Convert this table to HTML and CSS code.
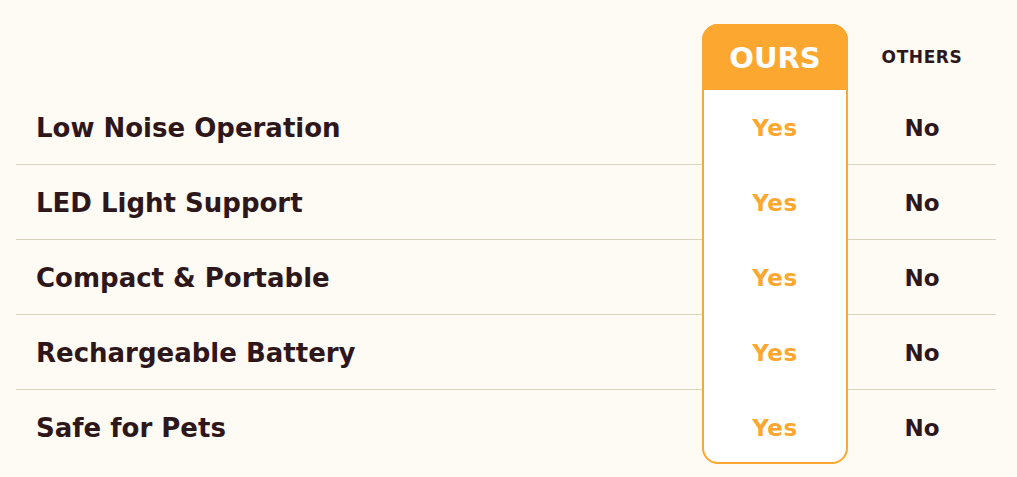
FILE: index.html
```html
<!DOCTYPE html>
<html lang="en">
<head>
<meta charset="utf-8">
<title>Comparison</title>
<link rel="stylesheet" href="styles.css">
</head>
<body>
<div class="table">
  <div class="ours-col"></div>
  <div class="head-ours">OURS</div>
  <div class="head-others">OTHERS</div>

  <div class="label line r1">Low Noise Operation</div>
  <div class="yes r1">Yes</div>
  <div class="no line r1">No</div>

  <div class="label line r2">LED Light Support</div>
  <div class="yes r2">Yes</div>
  <div class="no line r2">No</div>

  <div class="label line r3">Compact &amp; Portable</div>
  <div class="yes r3">Yes</div>
  <div class="no line r3">No</div>

  <div class="label line r4">Rechargeable Battery</div>
  <div class="yes r4">Yes</div>
  <div class="no line r4">No</div>

  <div class="label r5">Safe for Pets</div>
  <div class="yes r5">Yes</div>
  <div class="no r5">No</div>
</div>
</body>
</html>
```
FILE: styles.css
```css
html, body {
  margin: 0;
  padding: 0;
  background: #fefaf4;
}
body {
  font-family: "DejaVu Sans", sans-serif;
  color: #2e171a;
}
.table {
  display: grid;
  grid-template-columns: 686px 146px 148px;
  grid-template-rows: 66px repeat(4, 75px) 74px;
  margin: 24px 0 0 16px;
  width: 980px;
}
.r1 { grid-row: 2; }
.r2 { grid-row: 3; }
.r3 { grid-row: 4; }
.r4 { grid-row: 5; }
.r5 { grid-row: 6; }
.ours-col {
  grid-column: 2;
  grid-row: 1 / -1;
  background: #ffffff;
  border: 2px solid #fca730;
  border-radius: 16px;
}
.head-ours {
  grid-column: 2;
  grid-row: 1;
  background: #fca730;
  border-radius: 16px 16px 0 0;
  color: #ffffff;
  font-weight: 700;
  font-size: 29px;
  display: flex;
  align-items: center;
  justify-content: center;
  padding-top: 1px;
}
.head-others {
  grid-column: 3;
  grid-row: 1;
  font-weight: 700;
  font-size: 17px;
  letter-spacing: 0.6px;
  display: flex;
  align-items: center;
  justify-content: center;
}
.label {
  grid-column: 1;
  font-weight: 700;
  font-size: 26px;
  display: flex;
  align-items: center;
  padding-left: 20px;
  padding-top: 1px;
}
.yes {
  grid-column: 2;
  color: #fca730;
  font-weight: 700;
  font-size: 23px;
  letter-spacing: 0.6px;
  display: flex;
  align-items: center;
  justify-content: center;
  padding-top: 1px;
}
.no {
  grid-column: 3;
  font-weight: 700;
  font-size: 23px;
  display: flex;
  align-items: center;
  justify-content: center;
  padding-top: 1px;
}
.r5.yes, .r5.no, .r5.label { padding-top: 2px; }
.line {
  border-bottom: 1px solid #d9d3bf;
}
```
